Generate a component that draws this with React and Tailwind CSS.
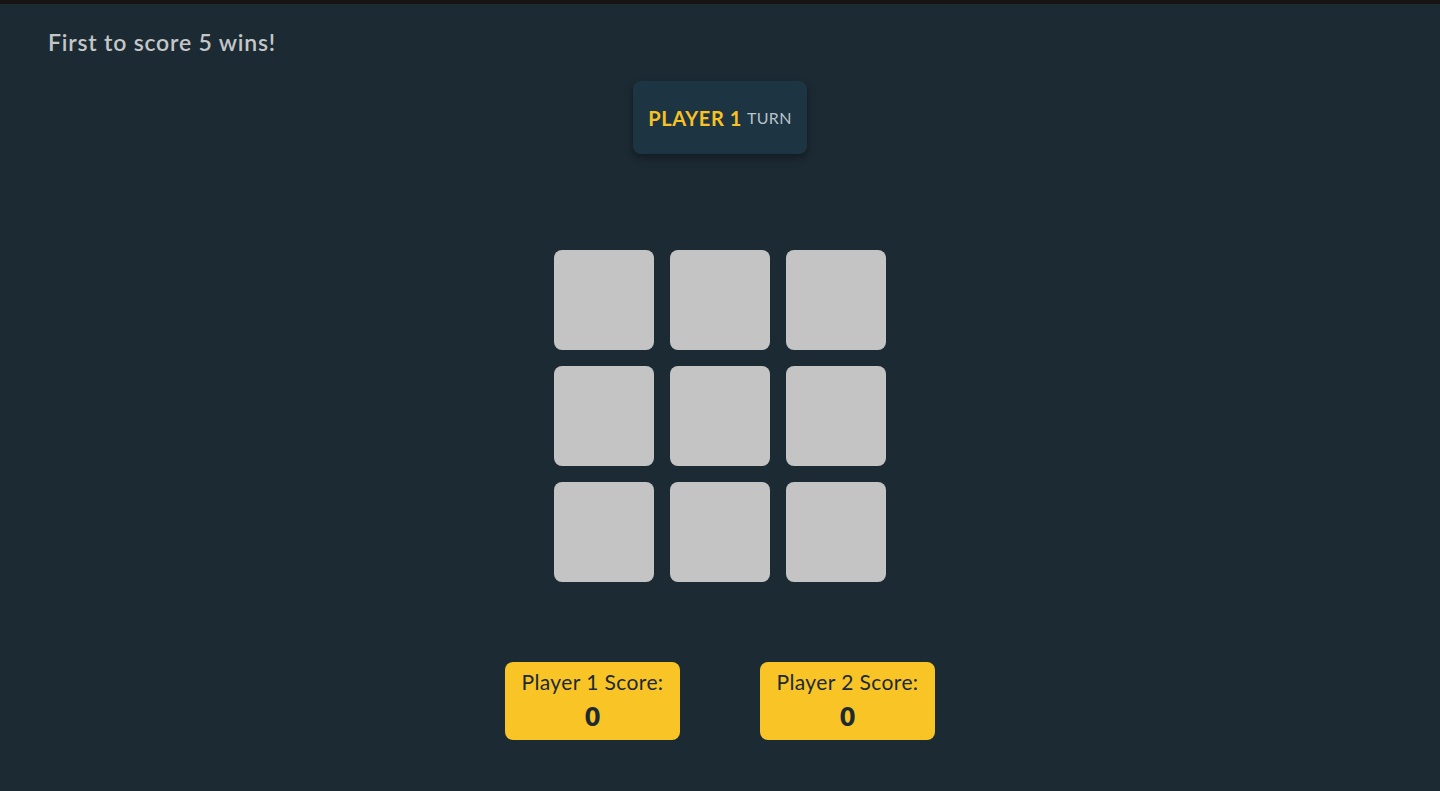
import React from "react";

export default function App() {
  const cells = Array.from({ length: 9 });
  return (
    <div
      className="min-h-[791px] w-full bg-[#1c2a33] border-t-4 border-[#161514] flex flex-col"
      style={{ fontFamily: "Lato, 'Open Sans', sans-serif" }}
    >
      <h1 className="pl-12 pt-[22px] text-[23px] leading-[32px] font-semibold tracking-[0.8px] text-[#c3c6c8]">
        First to score 5 wins!
      </h1>
      <div className="flex justify-center mt-[23px]">
        <div className="w-[174px] h-[73px] rounded-lg bg-[#1d3442] shadow-[0_4px_8px_rgba(0,0,0,0.35)] flex items-center justify-center gap-[5px]">
          <span className="text-[20px] font-bold tracking-[0.6px] text-[#f8c224]">PLAYER 1</span>
          <span className="text-[16px] tracking-[0.3px] text-[#b9c3c9] mt-[1px]">TURN</span>
        </div>
      </div>
      <div className="flex justify-center mt-[96px]">
        <div className="grid grid-cols-3 gap-4">
          {cells.map((_, i) => (
            <div key={i} className="w-[100px] h-[100px] rounded-lg bg-[#c4c4c4]" />
          ))}
        </div>
      </div>
      <div className="flex justify-center gap-20 mt-[80px]">
        {["Player 1 Score:", "Player 2 Score:"].map((t) => (
          <div
            key={t}
            className="w-[175px] h-[78px] rounded-lg bg-[#f9c425] flex flex-col items-center pt-[8px] text-[#1c2a33]"
          >
            <span className="text-[21px] leading-[24px] tracking-[0.4px]">{t}</span>
            <span className="text-[26px] leading-[30px] font-extrabold mt-[7px]">0</span>
          </div>
        ))}
      </div>
    </div>
  );
}
